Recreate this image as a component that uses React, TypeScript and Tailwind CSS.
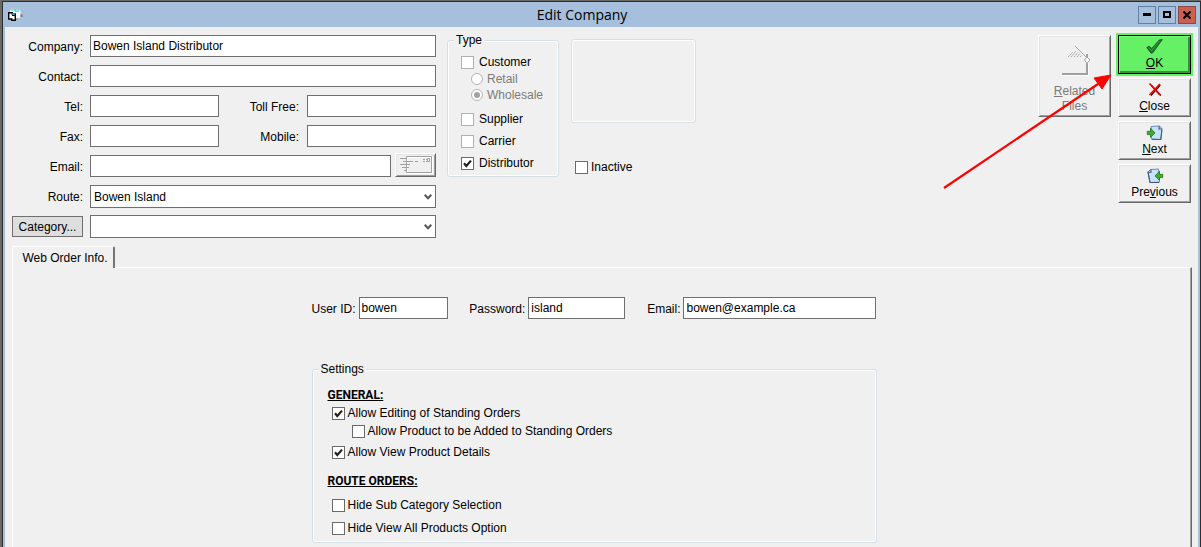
import { useState } from "react";
import type { ReactNode } from "react";
import clsx from "clsx";

const RAISED =
  "border border-t-white border-l-white border-r-[#696969] border-b-[#696969] shadow-[inset_1px_1px_0_#e3e3e3,inset_-1px_-1px_0_#a0a0a0]";

type TextFieldProps = {
  id: string;
  value?: string;
  className?: string;
};

function TextField({ id, value = "", className }: TextFieldProps) {
  return (
    <input
      id={id}
      type="text"
      defaultValue={value}
      className={clsx("h-[22px] min-w-0 border border-[#6f6f6f] bg-white px-0.5 outline-none", className)}
    />
  );
}

function FieldLabel({ htmlFor, children }: { htmlFor: string; children: ReactNode }) {
  return (
    <label htmlFor={htmlFor} className="text-right leading-6 whitespace-nowrap">
      {children}
    </label>
  );
}

function SelectField({ id, label, options }: { id: string; label?: string; options: string[] }) {
  return (
    <div className="grid h-[22px]">
      <select
        id={id}
        aria-label={label}
        className="col-start-1 row-start-1 h-[23px] w-full appearance-none border border-[#6f6f6f] bg-white px-[3px] outline-none"
      >
        {options.map((option) => (
          <option key={option}>{option}</option>
        ))}
      </select>
      <svg
        viewBox="0 0 8 6"
        className="pointer-events-none col-start-1 row-start-1 mr-1 h-1.5 w-2 self-center justify-self-end"
      >
        <path d="M0.7 0.8 4 4.2 7.3 0.8" fill="none" stroke="#555" strokeWidth="2" />
      </svg>
    </div>
  );
}

type CheckFieldProps = {
  label: string;
  checked?: boolean;
  faded?: boolean;
  className?: string;
  gap?: string;
};

function CheckField({ label, checked = false, faded = false, className, gap = "gap-[3px]" }: CheckFieldProps) {
  const [on, setOn] = useState(checked);

  return (
    <label className={clsx("flex items-center whitespace-nowrap", gap, className)}>
      <span className="grid size-[13px] shrink-0">
        <input
          type="checkbox"
          checked={on}
          onChange={(event) => setOn(event.target.checked)}
          className={clsx(
            "col-start-1 row-start-1 size-[13px] appearance-none border bg-white",
            faded ? "border-[#b0b0b0]" : "border-[#6a6a6a]",
          )}
        />
        {on && (
          <svg viewBox="0 0 13 13" className="pointer-events-none col-start-1 row-start-1 size-[13px]">
            <path d="M3 6.3 5.3 9 10 3.6" fill="none" stroke="#222" strokeWidth="2.2" />
          </svg>
        )}
      </span>
      {label}
    </label>
  );
}

function RadioField({ label, checked = false, className }: { label: string; checked?: boolean; className?: string }) {
  return (
    <label className={clsx("ml-[10px] flex h-4 items-center gap-1 text-[#7b7b7b]", className)}>
      <span className="grid size-3 shrink-0 place-items-center">
        <input
          type="radio"
          name="customerType"
          disabled
          defaultChecked={checked}
          className="col-start-1 row-start-1 size-3 appearance-none rounded-full border border-[#b4b4b4] bg-white"
        />
        {checked && <span className="col-start-1 row-start-1 size-1.5 rounded-full bg-[#a3a3a3]" />}
      </span>
      {label}
    </label>
  );
}

function AppIcon() {
  return (
    <svg viewBox="0 0 16 14" className="h-3.5 w-4">
      <path d="M2 2.5 4 1 12.5 2.5V9.5L8 11H2Z" fill="#f8f8f8" />
      <path d="M2.5 1.5 4 0.5 12.5 2" fill="none" stroke="#d9c3a0" strokeWidth="0.8" />
      <path d="M3.5 2H8M7 3.2H11" stroke="#00e5ee" strokeWidth="1.2" />
      <path d="M12.5 6.5H14.5V9H12.5ZM8 10.5H10V11.5H8Z" fill="#777" />
      <path d="M0.7 4.7H4.3V6H7.3V12.3H3.8V11H0.7Z" fill="#fff" stroke="#000" strokeWidth="1.4" />
      <path d="M4 6H7" stroke="#00d5dd" strokeWidth="1.2" />
      <path d="M4 7.5H7.5" stroke="#000" strokeWidth="1" />
    </svg>
  );
}

function CheckIcon() {
  return (
    <svg viewBox="0 0 18 16" className="h-4 w-[18px]">
      <path d="M0.8 8.5 3.2 7.3 5.8 9.4 13.2 1 16.3 0.6 6.8 13.8 5 14.2Z" fill="#1c7f28" stroke="#24402c" strokeWidth="0.8" />
      <path d="M2.6 8.8 5.6 11.6 13.6 1.8" fill="none" stroke="#2fa53a" strokeWidth="1" />
    </svg>
  );
}

function CrossIcon() {
  return (
    <svg viewBox="0 0 16 16" className="size-4">
      <path d="M4.5 3.5 13.8 13.5M13.2 3 4 13.5" stroke="#300000" strokeWidth="1.3" />
      <path d="M2.5 1.5 13 12.8M13 2 2.5 13" stroke="#ee0000" strokeWidth="1.8" />
    </svg>
  );
}

function NextIcon() {
  return (
    <svg viewBox="0 0 18 16" className="h-4 w-[18px]">
      <path d="M5 1.5 13.5 1 16 3.5 14.8 14.5 5.5 14.2Z" fill="#c9e2fb" stroke="#6c8db8" strokeWidth="1" />
      <path d="M13.2 1 13 4 16 4M6 14.3 14.8 14.5 15.9 5" fill="none" stroke="#3f5878" strokeWidth="1.1" />
      <path d="M1.3 6.3H4.5V3.2L9 8 4.5 12.3V9.6H1.3Z" fill="#3fae2a" stroke="#22701a" strokeWidth="0.8" />
    </svg>
  );
}

function PreviousIcon() {
  return (
    <svg viewBox="0 0 18 16" className="h-4 w-[18px]">
      <path d="M4.5 1.5 12.5 1 13.5 14.2 4 14.5 2 4Z" fill="#c9e2fb" stroke="#6c8db8" strokeWidth="1" />
      <path d="M4.8 1.3 5 4.3 2 4.2 4 14.5H13" fill="none" stroke="#3f5878" strokeWidth="1.1" />
      <path d="M16.7 6.3H13.5V3.2L9 8 13.5 12.3V9.6H16.7Z" fill="#3fae2a" stroke="#22701a" strokeWidth="0.8" />
    </svg>
  );
}

function RelatedIcon() {
  return (
    <svg viewBox="0 0 30 32" className="h-8 w-[30px]" fill="none">
      <path d="M2 31.5H28.5V19" stroke="#fff" strokeWidth="1" />
      <path d="M2 30H27V10" stroke="#a0a0a0" strokeWidth="2" />
      <path d="M15 2 27 14" stroke="#a5a5a5" strokeWidth="1" />
      <path d="M24.5 16 27 13 30 16 27 19.5Z" fill="#f8f8f8" stroke="#a5a5a5" strokeWidth="1" />
      <path
        d="M8 13 13 8M11 13 16 7M14 13 18 8.5M17 13 20 9.5M20 13 22 11"
        stroke="#a5a5a5"
        strokeWidth="1"
        strokeDasharray="1.8 0.5"
      />
    </svg>
  );
}

function MailIcon() {
  return (
    <svg viewBox="0 0 34 18" className="h-[18px] w-[34px]" fill="none">
      <path d="M8.5 1.5H33.5V17.5H8.5Z" stroke="#fff" />
      <path d="M7.5 0.5H32.5V16.5H7.5Z" stroke="#a0a0a0" />
      <path d="M1 2.5H8M4 5.5H14M16 5.5H19M1 8.5H11M3 11.5H10M5 14.5H8" stroke="#a0a0a0" />
      <path d="M24 3.5H26M24 5.5H26M27 3.5H28M27 5.5H28M28.5 2.5H30.5V5.5H28.5Z" stroke="#a0a0a0" />
    </svg>
  );
}

type ActionButtonProps = {
  icon: ReactNode;
  children: ReactNode;
  primary?: boolean;
};

function ActionButton({ icon, children, primary = false }: ActionButtonProps) {
  return (
    <button
      type="button"
      className={clsx(
        "flex h-[39px] w-[73px] flex-col items-center pt-[3px] leading-4",
        primary
          ? "border border-black bg-[#66f066] shadow-[0_0_0_2px_#66f066,inset_1px_1px_0_#7cf97c,inset_-2px_-2px_0_#3c8f3c]"
          : RAISED,
      )}
    >
      {icon}
      <span>{children}</span>
    </button>
  );
}

function TitleBar() {
  return (
    <header className="flex h-[25px] items-center pr-0.5 pl-[3px]">
      <AppIcon />
      <h1 className="flex-1 pl-0.5 text-center font-['Open_Sans',sans-serif] text-sm leading-6">Edit Company</h1>
      <div className="flex gap-0.5">
        <button type="button" aria-label="Minimize" className="grid size-[18px] place-items-center border border-[#6480a0]">
          <span className="h-[3px] w-2 bg-black" />
        </button>
        <button type="button" aria-label="Maximize" className="grid size-[18px] place-items-center border border-[#6480a0]">
          <span className="h-[7px] w-2 border-2 border-black" />
        </button>
        <button
          type="button"
          aria-label="Close window"
          className="grid size-[18px] place-items-center border border-[#8c4a44] bg-[#cb5f50]"
        >
          <svg viewBox="0 0 8 8" className="size-2">
            <path d="M0.5 0.5 7.5 7.5M7.5 0.5 0.5 7.5" stroke="#000" strokeWidth="2" />
          </svg>
        </button>
      </div>
    </header>
  );
}

function CompanyForm() {
  return (
    <div className="mt-2 grid w-[424px] shrink-0 auto-rows-[22px] grid-cols-[71px_minmax(0,1fr)] gap-x-[7px] gap-y-2">
      <FieldLabel htmlFor="company">Company:</FieldLabel>
      <TextField id="company" value="Bowen Island Distributor" />

      <FieldLabel htmlFor="contact">Contact:</FieldLabel>
      <TextField id="contact" />

      <FieldLabel htmlFor="tel">Tel:</FieldLabel>
      <div className="flex justify-between">
        <TextField id="tel" className="w-[129px]" />
        <div className="flex gap-2">
          <FieldLabel htmlFor="tollFree">Toll Free:</FieldLabel>
          <TextField id="tollFree" className="w-[129px]" />
        </div>
      </div>

      <FieldLabel htmlFor="fax">Fax:</FieldLabel>
      <div className="flex justify-between">
        <TextField id="fax" className="w-[129px]" />
        <div className="flex gap-2">
          <FieldLabel htmlFor="mobile">Mobile:</FieldLabel>
          <TextField id="mobile" className="w-[129px]" />
        </div>
      </div>

      <FieldLabel htmlFor="email">Email:</FieldLabel>
      <div className="flex items-end gap-1">
        <TextField id="email" className="flex-1" />
        <button
          type="button"
          aria-label="Send email"
          disabled
          className={clsx("grid h-6 w-[41px] place-items-center", RAISED)}
        >
          <MailIcon />
        </button>
      </div>

      <FieldLabel htmlFor="route">Route:</FieldLabel>
      <SelectField id="route" options={["Bowen Island"]} />

      <button type="button" className="mt-px h-[21px] border border-[#6f6f6f] bg-[#dedede]">
        Category...
      </button>
      <SelectField id="category" label="Category" options={[""]} />
    </div>
  );
}

function TypeGroup() {
  return (
    <fieldset className="mt-[5px] ml-[11px] h-[145px] w-28 shrink-0 rounded-[3px] border border-[#d5dfe5] px-[13px] shadow-[inset_0_0_0_1px_#fff]">
      <legend className="-ml-[7px] bg-[#f0f0f0] px-0.5 leading-4">Type</legend>
      <CheckField label="Customer" faded gap="gap-[5px]" className="mt-1.5 h-4" />
      <RadioField label="Retail" className="mt-px" />
      <RadioField label="Wholesale" checked />
      <CheckField label="Supplier" faded gap="gap-[5px]" className="mt-2 h-4" />
      <CheckField label="Carrier" faded gap="gap-[5px]" className="mt-1.5 h-4" />
      <CheckField label="Distributor" checked gap="gap-[5px]" className="mt-1.5 h-4" />
    </fieldset>
  );
}

function Actions() {
  return (
    <div className="relative mt-2 mr-px ml-auto flex items-start gap-[7px]">
      <button
        type="button"
        disabled
        className={clsx("flex h-[82px] w-[73px] flex-col items-center pt-2 leading-[15px] text-[#7b7b7b]", RAISED)}
      >
        <RelatedIcon />
        <span className="mt-2 w-12">
          <u>R</u>elated Files
        </span>
      </button>
      <div className="flex flex-col gap-1">
        <ActionButton icon={<CheckIcon />} primary>
          <u>O</u>K
        </ActionButton>
        <ActionButton icon={<CrossIcon />}>
          <u>C</u>lose
        </ActionButton>
        <ActionButton icon={<NextIcon />}>
          <u>N</u>ext
        </ActionButton>
        <ActionButton icon={<PreviousIcon />}>
          Pre<u>v</u>ious
        </ActionButton>
      </div>
      {/* callout arrow pointing at the OK button */}
      <svg viewBox="0 0 170 116" className="pointer-events-none absolute top-[39px] right-[79px] h-[116px] w-[170px]">
        <path d="M2 114 156 10" stroke="#ff0000" strokeWidth="2.2" />
        <path d="M169 1 160 15 152 4Z" fill="#ff0000" stroke="#ff0000" strokeWidth="1" />
      </svg>
    </div>
  );
}

function LoginFields() {
  return (
    <div className="flex justify-between">
      <div className="flex gap-[3px]">
        <FieldLabel htmlFor="userId">User ID:</FieldLabel>
        <TextField id="userId" value="bowen" className="w-[89px]" />
      </div>
      <div className="flex gap-[3px]">
        <FieldLabel htmlFor="password">Password:</FieldLabel>
        <TextField id="password" value="island" className="w-[97px]" />
      </div>
      <div className="flex gap-[3px]">
        <FieldLabel htmlFor="webEmail">Email:</FieldLabel>
        <TextField id="webEmail" value="bowen@example.ca" className="w-[193px]" />
      </div>
    </div>
  );
}

function SettingsGroup() {
  return (
    <fieldset className="mt-10 rounded-[3px] border border-[#d5dfe5] px-[15px] pb-[5px] shadow-[inset_0_0_0_1px_#fff]">
      <legend className="-ml-[9px] bg-[#f0f0f0] px-0.5 leading-4">Settings</legend>
      <h2 className="mt-[9px] font-['Roboto',sans-serif] leading-[18px] font-bold underline">GENERAL:</h2>
      <CheckField label="Allow Editing of Standing Orders" checked className="ml-1 h-[18px]" />
      <CheckField label="Allow Product to be Added to Standing Orders" className="ml-6 h-[18px]" />
      <CheckField label="Allow View Product Details" checked className="mt-[3px] ml-1 h-[18px]" />
      <h2 className="mt-[11px] font-['Roboto',sans-serif] leading-[18px] font-bold underline">ROUTE ORDERS:</h2>
      <CheckField label="Hide Sub Category Selection" className="mt-1.5 ml-1 h-[18px]" />
      <CheckField label="Hide View All Products Option" className="mt-[5px] ml-1 h-[18px]" />
    </fieldset>
  );
}

export default function App() {
  return (
    <div className="flex min-h-screen flex-col bg-[#6b6966] pt-px pl-0.5 font-['Liberation_Sans',Arial,sans-serif] text-xs text-black">
      <div className="flex flex-1 flex-col border-x border-t border-[#2e2e2e] bg-[#a6bfdc] px-0.5">
        <TitleBar />
        <main className="flex flex-1 flex-col bg-[#f0f0f0] pr-1.5 pl-[7px]">
          <div className="flex items-start">
            <CompanyForm />
            <TypeGroup />
            <div className="ml-3 w-[125px] shrink-0">
              <div className="mt-3 h-[84px] rounded-[3px] border border-[#d5dfe5] shadow-[inset_0_0_0_1px_#fff]" />
              <CheckField label="Inactive" className="mt-9 ml-1 h-4" />
            </div>
            <Actions />
          </div>

          <div role="tablist" className="mt-[9px] flex">
            <button
              type="button"
              role="tab"
              aria-selected="true"
              className="z-10 -mb-px h-[22px] w-[103px] rounded-t-[2px] border-t border-r-2 border-l border-t-white border-r-[#757575] border-l-white bg-[#f0f0f0] pl-1"
            >
              Web Order Info.
            </button>
          </div>
          <section
            role="tabpanel"
            className="flex-1 border-t border-r border-l border-t-white border-r-[#696969] border-l-white pt-[29px] pr-4 pb-[3px] shadow-[inset_-1px_0_0_#a0a0a0]"
          >
            <div className="mx-auto w-[565px]">
              <LoginFields />
              <SettingsGroup />
            </div>
          </section>
        </main>
      </div>
    </div>
  );
}
